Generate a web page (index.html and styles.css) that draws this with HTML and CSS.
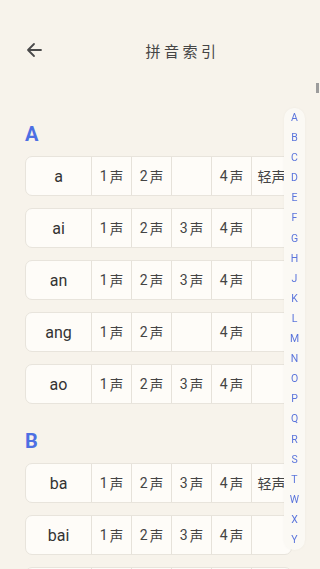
FILE: index.html
```html
<!DOCTYPE html>
<html lang="zh">
<head>
<meta charset="utf-8">
<title>拼音索引</title>
<link rel="stylesheet" href="styles.css">
</head>
<body>
<header class="topbar">
  <button class="back" aria-label="返回">
    <svg width="16" height="16" viewBox="0 0 16 16"><path d="M15 8H2M8 2L2 8l6 6" fill="none" stroke="#4a4a4a" stroke-width="1.8" stroke-linecap="round" stroke-linejoin="round"/></svg>
  </button>
  <h1 class="title">拼音索引</h1>
</header>
<div class="page">
  <section class="group">
    <h2 class="letter">A</h2>
    <div class="row"><div class="py">a</div><div class="t">1<span>声</span></div><div class="t">2<span>声</span></div><div class="t"></div><div class="t">4<span>声</span></div><div class="t">轻声</div></div>
    <div class="row"><div class="py">ai</div><div class="t">1<span>声</span></div><div class="t">2<span>声</span></div><div class="t">3<span>声</span></div><div class="t">4<span>声</span></div><div class="t"></div></div>
    <div class="row"><div class="py">an</div><div class="t">1<span>声</span></div><div class="t">2<span>声</span></div><div class="t">3<span>声</span></div><div class="t">4<span>声</span></div><div class="t"></div></div>
    <div class="row"><div class="py">ang</div><div class="t">1<span>声</span></div><div class="t">2<span>声</span></div><div class="t"></div><div class="t">4<span>声</span></div><div class="t"></div></div>
    <div class="row"><div class="py">ao</div><div class="t">1<span>声</span></div><div class="t">2<span>声</span></div><div class="t">3<span>声</span></div><div class="t">4<span>声</span></div><div class="t"></div></div>
  </section>

  <section class="group">
    <h2 class="letter">B</h2>
    <div class="row"><div class="py">ba</div><div class="t">1<span>声</span></div><div class="t">2<span>声</span></div><div class="t">3<span>声</span></div><div class="t">4<span>声</span></div><div class="t">轻声</div></div>
    <div class="row"><div class="py">bai</div><div class="t">1<span>声</span></div><div class="t">2<span>声</span></div><div class="t">3<span>声</span></div><div class="t">4<span>声</span></div><div class="t"></div></div>
    <div class="row"><div class="py">ban</div><div class="t">1<span>声</span></div><div class="t"></div><div class="t">3<span>声</span></div><div class="t">4<span>声</span></div><div class="t"></div></div>
  </section>
</div>

<nav class="index">
  <a>A</a><a>B</a><a>C</a><a>D</a><a>E</a><a>F</a><a>G</a><a>H</a><a>J</a><a>K</a><a>L</a><a>M</a><a>N</a><a>O</a><a>P</a><a>Q</a><a>R</a><a>S</a><a>T</a><a>W</a><a>X</a><a>Y</a>
</nav>
<div class="thumb"></div>
</body>
</html>
```

FILE: styles.css
```css
html, body {
  margin: 0;
  padding: 0;
  height: 100%;
  overflow: hidden;
  background: #f7f3eb;
}
body {
  font-family: Roboto, "Noto Sans", "Noto Sans CJK SC", sans-serif;
  color: #3a3a3a;
}
.topbar {
  display: flex;
  align-items: center;
  height: 100px;
}
.back {
  margin-left: 25px;
  width: 17px;
  height: 16px;
  padding: 0;
  border: 0;
  background: none;
  display: flex;
  align-items: center;
  justify-content: center;
}
.title {
  flex: 1;
  margin: 0;
  text-align: center;
  font-family: "Noto Sans CJK SC", sans-serif;
  font-weight: 400;
  font-size: 15px;
  letter-spacing: 3.5px;
  padding-left: 3px;
  color: #454545;
}
.page {
  padding: 0 28px 0 25px;
}
.group {
  display: flex;
  flex-direction: column;
  gap: 12px;
  margin-top: 22px;
  width: 267px;
}
.group + .group {
  margin-top: 25px;
}
.letter {
  margin: 0 0 -2px 0;
  height: 24px;
  line-height: 24px;
  font-size: 20px;
  font-weight: 700;
  color: #4d6fe3;
}
.row {
  display: grid;
  grid-template-columns: 65px repeat(5, 1fr);
  height: 40px;
  box-sizing: border-box;
  background: #fefcf8;
  border: 1px solid #e8e4dc;
  border-radius: 7px;
  overflow: hidden;
}
.py {
  display: flex;
  align-items: center;
  justify-content: center;
  font-size: 16px;
  color: #333;
}
.t {
  display: flex;
  align-items: center;
  justify-content: center;
  border-left: 1px solid #e6e2da;
  font-size: 14px;
  color: #444;
  white-space: nowrap;
  font-family: Roboto, "Noto Sans CJK SC", sans-serif;
}
.t span {
  font-family: "Noto Sans CJK SC", sans-serif;
  margin-left: 2px;
  font-size: 13.5px;
}
.index {
  position: fixed;
  left: 284px;
  top: 108px;
  width: 21px;
  padding: 0;
  background: #fbf9f4;
  border-radius: 11px;
  box-shadow: 0 0 3px rgba(0,0,0,0.04);
  display: flex;
  flex-direction: column;
  align-items: center;
}
.index a {
  display: block;
  height: 20.1px;
  line-height: 20.1px;
  font-size: 10.5px;
  color: #5b75dc;
  text-align: center;
}
.thumb {
  position: fixed;
  right: 1px;
  top: 83px;
  width: 3px;
  height: 10px;
  background: #9c9c9c;
}
```
